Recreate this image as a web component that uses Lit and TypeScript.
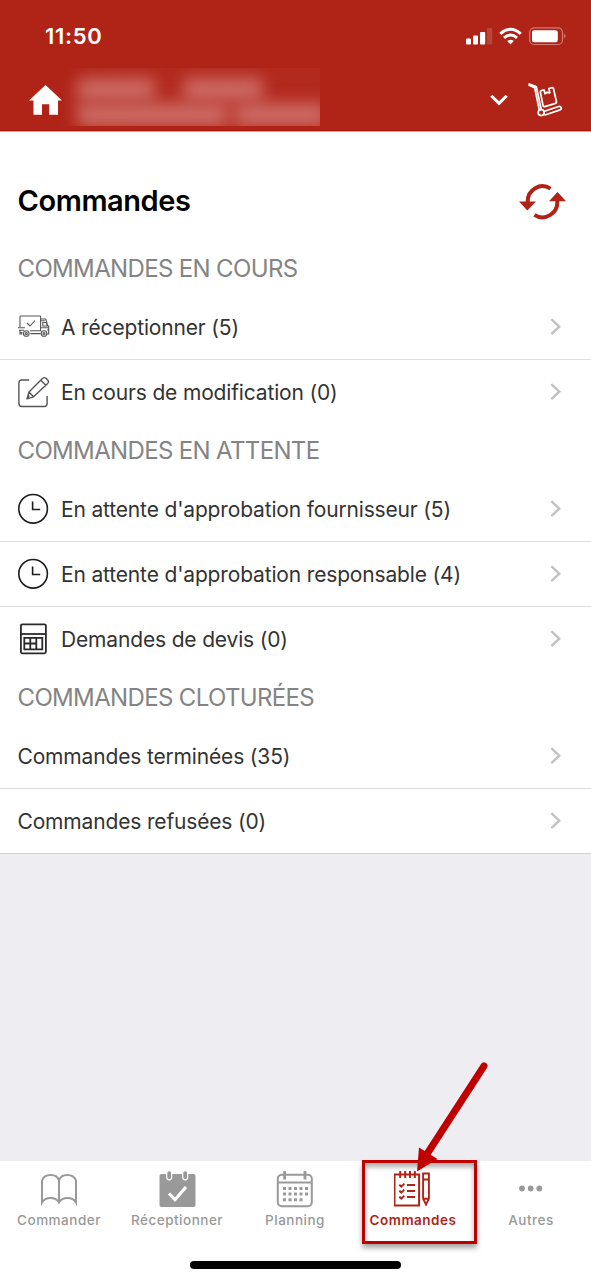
import { LitElement, html, css, svg, nothing } from 'lit';
import { customElement, property } from 'lit/decorators.js';

const icons: Record<string, unknown> = {
  truck: html`<svg width="32" height="24" viewBox="0 0 32 24" fill="none" stroke="#555" stroke-width="1.1">
    <path d="M2 12V1.8Q2 1 2.8 1H21.8Q22.6 1 22.6 1.8V15.5M9 8l3 3 5-5.5M22.6 4h5.2l1.7 6.2 1.2 1V19h-1.6M22.6 5.8h4.2M24.8 7.5h3.6l.8 3.5h-4.4zM22.6 12.8h7.8M0 12.8h7M1 15.3h5M2 17.6h2.4M12 15.8h11M12.4 18.6h10.2M2 15v4h2.4M29 15h1.6"/>
    <circle cx="8.3" cy="18.5" r="2.8"/><circle cx="8.3" cy="18.5" r="1"/><circle cx="26" cy="18.5" r="2.8"/><circle cx="26" cy="18.5" r="1"/></svg>`,
  edit: html`<svg width="32" height="32" viewBox="0 0 32 32" fill="none" stroke="#555" stroke-width="1.4" stroke-linejoin="round">
    <path d="M11.2 4H3.8Q.9 4 .9 6.9V27.6Q.9 30.5 3.8 30.5H26.2Q29.1 30.5 29.1 27.6V20"/>
    <path d="M9 22.8l2-6.8L24.4 2.5q1.7-1.5 3.3-.5l1.8 1.7q1.8 1.9.2 3.7L15.5 20.8zM11 16l4.5 4.8M22.8 4.3l5 5M9 22.8l2.2-3.3"/></svg>`,
  clock: html`<svg width="32" height="32" viewBox="0 0 32 32" fill="none" stroke="#1d1d1d" stroke-width="1.6"><circle cx="15.1" cy="15.8" r="14.3"/><path d="M14.6 8.4v8.1h7.6"/></svg>`,
  quote: html`<svg width="32" height="32" viewBox="0 0 32 32" fill="none" stroke="#2a2a2a" stroke-width="1.8"><rect x="2.9" y="1.3" width="25" height="29" rx="1.5"/><path d="M2.9 11h25"/><path d="M6.3 14.8h18v11.5h-18zM12.3 14.8v11.5M18.3 14.8v11.5M6.3 20.5h12"/></svg>`,
  book: html`<svg width="38" height="38" viewBox="0 0 38 38" fill="none" stroke="#999" stroke-width="2"><path d="M19 10.5C17 3.2 4.500 3.2 2 10.5V32.5C5.5 26.5 15.5 26.5 19 32.5C22.5 26.5 32.5 26.5 36 32.5V10.5C33.5 3.2 21 3.2 19 10.5V32"/></svg>`,
  reception: html`<svg width="38" height="38" viewBox="0 0 38 38"><rect x="1.5" y="4" width="36" height="33" rx="2" fill="#999"/><g fill="#999" stroke="#fff" stroke-width="1.2"><rect x="8.7" y=".6" width="5" height="9.2" rx="2.5"/><rect x="24.7" y=".6" width="5" height="9.2" rx="2.5"/></g><path d="M11 23.5l6 6.2L28 17" fill="none" stroke="#fff" stroke-width="3.2"/></svg>`,
  planning: html`<svg width="38" height="38" viewBox="0 0 38 38" fill="none" stroke="#999" stroke-width="2"><rect x="1.8" y="4.8" width="34" height="31.5" rx="4"/><path d="M2 12.6h34"/><path d="M8.6 1v8.5M29 1v8.5" stroke-width="2.8"/>
    ${[0, 1, 2].map(r => svg`<path d="M7 ${18.5 + r * 5.6}H${r === 2 ? 27 : 32.5}" stroke-width="3" stroke-dasharray="3 2.5"/>`)}</svg>`,
  orders: html`<svg width="38" height="38" viewBox="1.5 0 38 38" fill="none" stroke="#b02418" stroke-width="2"><path d="M2 4.5h24.6v30.9H2zM7.7 1v7M12.7 1v7M17.5 1v7M22.3 1v7"/><path d="M14.5 15h8M14.5 21h8M14.5 27h8M6.8 14.8l2 1.8 3-3M6.8 20.8l2 1.8 3-3M6.8 26.8l2 1.8 3-3"/><path d="M30.6 3.5h5.8v25.3l-2.9 5.6-2.9-5.6zM30.6 9.5h5.8M30.6 28.8h5.8M33.5 32v3.5" stroke-width="1.9"/></svg>`,
  more: html`<svg width="38" height="38" viewBox="0 0 38 38" fill="#999"><circle cx="10" cy="18.5" r="2.9"/><circle cx="18.7" cy="18.5" r="2.9"/><circle cx="27.3" cy="18.5" r="2.9"/></svg>`,
};

@customElement('order-row')
class OrderRow extends LitElement {
  @property() icon = '';
  @property() label = '';
  @property({ type: Boolean, reflect: true }) divided = false;
  static styles = css`
    :host { display: flex; box-sizing: border-box; height: 65px; align-items: center; padding: 0 28px 0 17.5px; border-bottom: 1px solid transparent; }
    :host([divided]) { border-bottom-color: #dedee0; }
    .icon { width: 43.5px; display: flex; }
    .label { flex: 1; white-space: nowrap; font-size: 21px; letter-spacing: -0.16px; color: #333; padding-top: 1px; }
    .chevron { display: block; }
  `;
  render() {
    return html`${this.icon ? html`<span class="icon">${icons[this.icon]}</span>` : nothing}
      <span class="label">${this.label}</span>
      <svg class="chevron" width="14" height="20" viewBox="0 0 14 20" fill="none" stroke="#c2c2c4" stroke-width="2.4"><path d="M2.3 2.2l8 7.5-8 7.5"/></svg>`;
  }
}

@customElement('tab-item')
class TabItem extends LitElement {
  @property() icon = '';
  @property() label = '';
  @property({ type: Boolean, reflect: true }) active = false;
  static styles = css`
    :host { display: flex; flex-direction: column; align-items: center; padding-top: 9px; font-size: 13.5px; line-height: 16px; font-weight: 500; letter-spacing: 0.5px; color: #999; }
    :host([active]) { color: #b02418; font-weight: 600; }
    svg { display: block; }
    .label { margin-top: 4px; }
  `;
  render() {
    return html`${icons[this.icon]}<span class="label">${this.label}</span>`;
  }
}

const sections = [
  { title: 'COMMANDES EN COURS', rows: [['truck', 'A réceptionner (5)'], ['edit', 'En cours de modification (0)']] },
  { title: 'COMMANDES EN ATTENTE', rows: [['clock', "En attente d'approbation fournisseur (5)"], ['clock', "En attente d'approbation responsable (4)"], ['quote', 'Demandes de devis (0)']] },
  { title: 'COMMANDES CLOTURÉES', rows: [['', 'Commandes terminées (35)'], ['', 'Commandes refusées (0)']] },
];

@customElement('app-root')
class AppRoot extends LitElement {
  static styles = css`
    :host { display: flex; flex-direction: column; position: relative; box-sizing: border-box; width: 100%; height: 1280px; overflow: hidden; background: #eeedf2; font-family: Inter, "Liberation Sans", sans-serif; }
    svg { display: block; }
    header { height: 131px; background: #b02418; color: #fff; border-bottom: 1px solid #df9c96; box-sizing: content-box; box-shadow: inset 0 -1px #a8170c; }
    .status { height: 68px; display: flex; align-items: center; justify-content: space-between; padding: 3px 24px 0 45px; box-sizing: border-box; }
    .time { font-size: 22px; font-weight: 600; letter-spacing: 0.7px; }
    .nav { display: flex; height: 58px; align-items: center; padding: 0 28px 0 29px; }
    .home { margin: 6px 0 0; }
    .site { width: 258px; height: 58px; overflow: hidden; display: grid; align-content: start; gap: 2px; padding: 10px 0 0 15px; box-sizing: border-box; background: linear-gradient(90deg, #b02418, #b3291e 40%, #b3291e); }
    .line { display: flex; gap: 28px; filter: blur(8px); height: 23px; }
    .line.low { gap: 8px; height: 24px; }
    .line i { background: #cc6b64; border-radius: 4px; }
    .a { width: 78px; } .b { width: 80px; } .c { width: 150px; } .line .d { width: 92px; }
    .spacer { flex: 1; }
    .chev { margin: 6px 20px 0 0; }
    .cart { margin-top: 6px; }
    .card { background: #fff; border-bottom: 1px solid #d0d0d3; box-sizing: border-box; height: 722px; }
    .head { display: flex; height: 111px; box-sizing: border-box; padding: 26px 25px 0 17.5px; align-items: center; justify-content: space-between; }
    .refresh { margin-top: 2px; }
    h1 { margin: 0; font-size: 29px; font-weight: 600; letter-spacing: -0.42px; color: #000; }
    h2 { margin: 0; height: 52px; line-height: 52px; padding-left: 17.5px; font-size: 24px; font-weight: 400; letter-spacing: -0.65px; color: #848484; }
    .tabs { margin-top: auto; height: 119px; background: #fff; box-sizing: border-box; display: flex; flex-direction: column; align-items: center; }
    .row { display: grid; grid-template-columns: repeat(5, 1fr); width: 100%; height: 100px; box-sizing: border-box; padding-right: 1px; }
    .bar { width: 211px; height: 8px; border-radius: 4px; background: #000; }
    .frame { position: absolute; left: 362px; top: 1160px; width: 115px; height: 84px; box-sizing: border-box; border: 3px solid #c00000; box-shadow: 0 4px 5px rgba(0,0,0,.35), inset 0 4px 5px rgba(0,0,0,.32); }
    .arrow { position: absolute; left: 400px; top: 1050px; }
  `;
  render() {
    return html`
      <header>
        <div class="status">
          <span class="time">11:50</span>
          <svg width="102" height="20" viewBox="0 0 102 20" fill="#fff">
            <rect x="1" y="12.5" width="5" height="6" rx="1"/><rect x="8" y="9.5" width="5" height="9" rx="1"/><rect x="15" y="6" width="5.2" height="12.5" rx="1"/><rect x="22" y="2" width="5.2" height="16.5" rx="1" opacity=".15"/>
            <g fill="none" stroke="#fff" stroke-width="3"><path d="M35.3 7.8q10.2-9 20.4 0"/><path d="M39 11.8q6.5-5.6 13 0"/></g><path d="M45.5 18.5l-3.3-3.5q3.3-2.6 6.6 0z"/>
            <rect x="64.7" y="1.9" width="32.8" height="16.6" rx="4.5" fill="none" stroke="#fff" stroke-opacity=".4" stroke-width="1.2"/><rect x="67" y="4.2" width="25.8" height="12" rx="2.2"/><path d="M99.3 7.5v5q2.2-2.5 0-5z" opacity=".55"/>
          </svg>
        </div>
        <div class="nav">
          <svg class="home" width="33" height="30" viewBox="0 0 33 30" fill="#fff"><path d="M16.5 0L33 15.5H29V29.7H20.2V19.3H13V29.7H4.5V15.5H0z"/></svg>
          <div class="site"><div class="line"><i class="a"></i><i class="b"></i></div><div class="line low"><i class="c"></i><i class="d"></i></div></div>
          <span class="spacer"></span>
          <svg class="chev" width="18" height="12" viewBox="0 0 18 12" fill="none" stroke="#fff" stroke-width="3"><path d="M1.3 1.8L9 9.3l7.7-7.5"/></svg>
          <svg class="cart" width="35" height="36" viewBox="0 0 35 36" fill="none" stroke="#fff" stroke-width="1.7" stroke-linejoin="round" stroke-linecap="round"><path d="M1.2 2L7.6 4.4Q8.3 4.7 8.5 5.5L13.3 27.5M1 3.2L6.6 5.6 11.2 27.5"/><path d="M12.4 10.5Q12 9 13.4 8.6L16 7.8l1 4 2-1.5 2.8.6-.9-4.4 3-.8q1.3-.3 1.6 1l3 13q.3 1.3-1 1.7l-10.6 3.2q-1.5.4-1.8-1z"/><circle cx="13.2" cy="30.6" r="3"/><path d="M16.5 29.2l14.2-4.7q1.8-.5 2.5 1 .5 1.7-1.2 2.4L17 33"/></svg>
        </div>
      </header>
      <main class="card">
        <div class="head"><h1>Commandes</h1>
          <svg class="refresh" width="48" height="38" viewBox="0 0 48 38" fill="#b02418"><g fill="none" stroke="#b02418" stroke-width="4"><path d="M9.7 19A14.8 15.3 0 0 1 32.5 5.7"/><path d="M39.3 18A14.8 15.3 0 0 1 16.5 31.8"/></g><path d="M1 18.6h17L9.3 27.5zM31 18.3h17L39.5 9z"/></svg>
        </div>
        ${sections.map(s => html`<h2>${s.title}</h2>${s.rows.map((r, i) => html`<order-row .icon=${r[0]} .label=${r[1]} ?divided=${i < s.rows.length - 1}></order-row>`)}`)}
      </main>
      <nav class="tabs">
        <div class="row">
          <tab-item icon="book" label="Commander"></tab-item>
          <tab-item icon="reception" label="Réceptionner"></tab-item>
          <tab-item icon="planning" label="Planning"></tab-item>
          <tab-item icon="orders" label="Commandes" active></tab-item>
          <tab-item icon="more" label="Autres"></tab-item>
        </div>
        <span class="bar"></span>
      </nav>
      <div class="frame"></div>
      <svg class="arrow" width="100" height="130" viewBox="0 0 100 130" fill="#c00000"><path d="M84 16L27 104" stroke="#c00000" stroke-width="7" stroke-linecap="round"/><path d="M19 97.5L37.5 109 17 121.5z"/></svg>
    `;
  }
}
